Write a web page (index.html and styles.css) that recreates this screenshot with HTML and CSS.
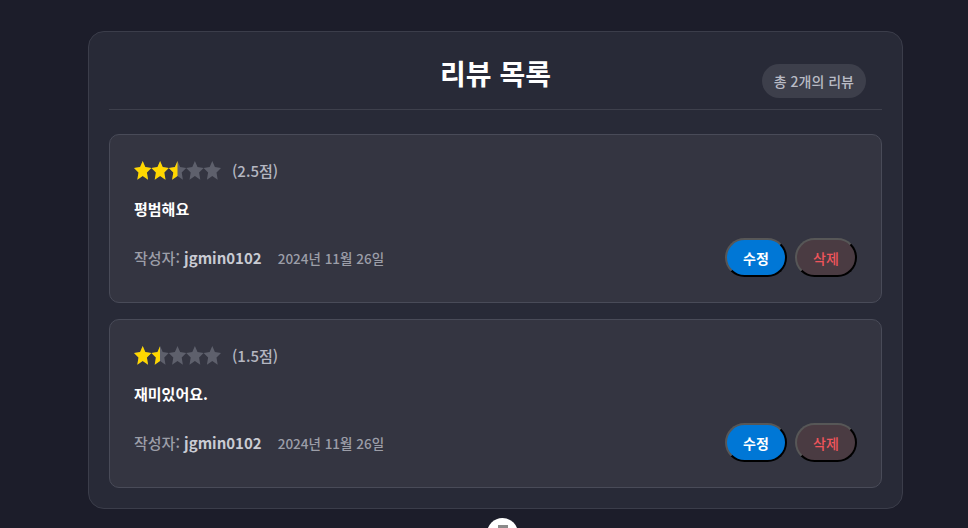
FILE: index.html
```html
<!DOCTYPE html>
<html lang="ko">
<head>
<meta charset="utf-8">
<title>리뷰 목록</title>
<link rel="stylesheet" href="styles.css">
</head>
<body>
<div class="panel">
  <div class="panel-head">
    <span></span>
    <h1 class="title">리뷰 목록</h1>
    <span class="count">총 2개의 리뷰</span>
  </div>
  <div class="list">
    <div class="card">
      <div class="rating">
        <svg class="stars" width="88" height="19" viewBox="0 0 88 19">
          <defs>
            <polygon id="st1" points="8.7,0 11.3,6.1 17.4,6.9 12.9,11.5 14.1,18.8 8.7,14.9 3.3,18.8 4.5,11.5 0,6.9 6.1,6.1"/>
            <clipPath id="c1"><rect x="0" y="0" width="43.5" height="19"/></clipPath>
          </defs>
          <g class="off">
            <use href="#st1" x="0"/><use href="#st1" x="17.4"/><use href="#st1" x="34.8"/><use href="#st1" x="52.2"/><use href="#st1" x="69.6"/>
          </g>
          <g class="on" clip-path="url(#c1)">
            <use href="#st1" x="0"/><use href="#st1" x="17.4"/><use href="#st1" x="34.8"/><use href="#st1" x="52.2"/><use href="#st1" x="69.6"/>
          </g>
        </svg>
        <span class="score">(2.5점)</span>
      </div>
      <p class="comment">평범해요</p>
      <div class="foot">
        <div class="meta">
          <span class="author">작성자: <b>jgmin0102</b></span>
          <span class="date">2024년 11월 26일</span>
        </div>
        <div class="actions">
          <button class="btn edit">수정</button>
          <button class="btn del">삭제</button>
        </div>
      </div>
    </div>
    <div class="card">
      <div class="rating">
        <svg class="stars" width="88" height="19" viewBox="0 0 88 19">
          <defs>
            <polygon id="st2" points="8.7,0 11.3,6.1 17.4,6.9 12.9,11.5 14.1,18.8 8.7,14.9 3.3,18.8 4.5,11.5 0,6.9 6.1,6.1"/>
            <clipPath id="c2"><rect x="0" y="0" width="26.1" height="19"/></clipPath>
          </defs>
          <g class="off">
            <use href="#st2" x="0"/><use href="#st2" x="17.4"/><use href="#st2" x="34.8"/><use href="#st2" x="52.2"/><use href="#st2" x="69.6"/>
          </g>
          <g class="on" clip-path="url(#c2)">
            <use href="#st2" x="0"/><use href="#st2" x="17.4"/><use href="#st2" x="34.8"/><use href="#st2" x="52.2"/><use href="#st2" x="69.6"/>
          </g>
        </svg>
        <span class="score">(1.5점)</span>
      </div>
      <p class="comment">재미있어요.</p>
      <div class="foot">
        <div class="meta">
          <span class="author">작성자: <b>jgmin0102</b></span>
          <span class="date">2024년 11월 26일</span>
        </div>
        <div class="actions">
          <button class="btn edit">수정</button>
          <button class="btn del">삭제</button>
        </div>
      </div>
    </div>
  </div>
</div>
<div class="below">
  <div class="fab"><span class="fab-icon"></span></div>
</div>
</body>
</html>
```

FILE: styles.css
```css
html, body {
  margin: 0;
  padding: 0;
}
body {
  background: #1c1d2a;
  font-family: "Noto Sans CJK KR", "Noto Sans", sans-serif;
  color: #ffffff;
  overflow: hidden;
  height: 528px;
}
.panel {
  box-sizing: border-box;
  width: 815px;
  margin: 31px 0 0 88px;
  padding: 20px;
  background: #282a37;
  border: 1px solid #3b3d4a;
  border-radius: 16px;
}
.panel-head {
  display: grid;
  grid-template-columns: 1fr auto 1fr;
  align-items: start;
  height: 57px;
  border-bottom: 1px solid #3e404c;
  margin-bottom: 24px;
}
.title {
  margin: 0;
  font-size: 28px;
  line-height: 42px;
  font-weight: 700;
  color: #ffffff;
}
.count {
  justify-self: end;
  margin: 12px 16px 0 0;
  height: 34px;
  line-height: 34px;
  padding: 0 12px;
  border-radius: 17px;
  background: #3d3f4b;
  color: #b9bbc5;
  font-size: 14px;
  font-weight: 500;
}
.list {
  display: flex;
  flex-direction: column;
  gap: 16px;
}
.card {
  background: #343541;
  border: 1px solid #494b58;
  border-radius: 10px;
  padding: 24px 24px 25px;
}
.rating {
  display: flex;
  align-items: center;
  height: 22px;
  margin-bottom: 17px;
}
.stars {
  display: block;
}
.stars .off {
  fill: #5e606c;
}
.stars .on {
  fill: #ffd700;
}
.score {
  margin-left: 10px;
  font-size: 15px;
  color: #b5b7c1;
  font-weight: 500;
}
.comment {
  margin: 0 0 18px 0;
  font-size: 15px;
  line-height: 22px;
  font-weight: 700;
  color: #ffffff;
}
.foot {
  display: flex;
  align-items: center;
  justify-content: space-between;
  height: 39px;
}
.meta {
  display: flex;
  align-items: center;
  gap: 16px;
}
.author {
  font-size: 15px;
  color: #9c9ea8;
  font-weight: 500;
}
.author b {
  color: #c9cbd3;
  font-weight: 700;
}
.date {
  font-size: 13.5px;
  color: #9c9ea8;
  font-weight: 500;
}
.actions {
  display: flex;
  gap: 8px;
}
.btn {
  box-sizing: border-box;
  width: 62px;
  height: 39px;
  border-radius: 20px;
  border: 2px solid;
  border-color: #575757 #000000 #000000 #575757;
  font-family: "Noto Sans CJK KR", "Noto Sans", sans-serif;
  font-size: 14px;
  font-weight: 700;
  padding: 0;
  cursor: pointer;
}
.edit {
  background: #0077d6;
  color: #ffffff;
}
.del {
  background: #4a3b42;
  color: #f0555b;
  font-weight: 500;
}
.below {
  padding: 9px 0 0 487px;
}
.fab {
  width: 31px;
  height: 31px;
  border-radius: 50%;
  background: #ffffff;
  display: flex;
  justify-content: center;
  padding-top: 7px;
  box-sizing: border-box;
}
.fab-icon {
  width: 10px;
  height: 4px;
  background: #8a8a8a;
}
```
